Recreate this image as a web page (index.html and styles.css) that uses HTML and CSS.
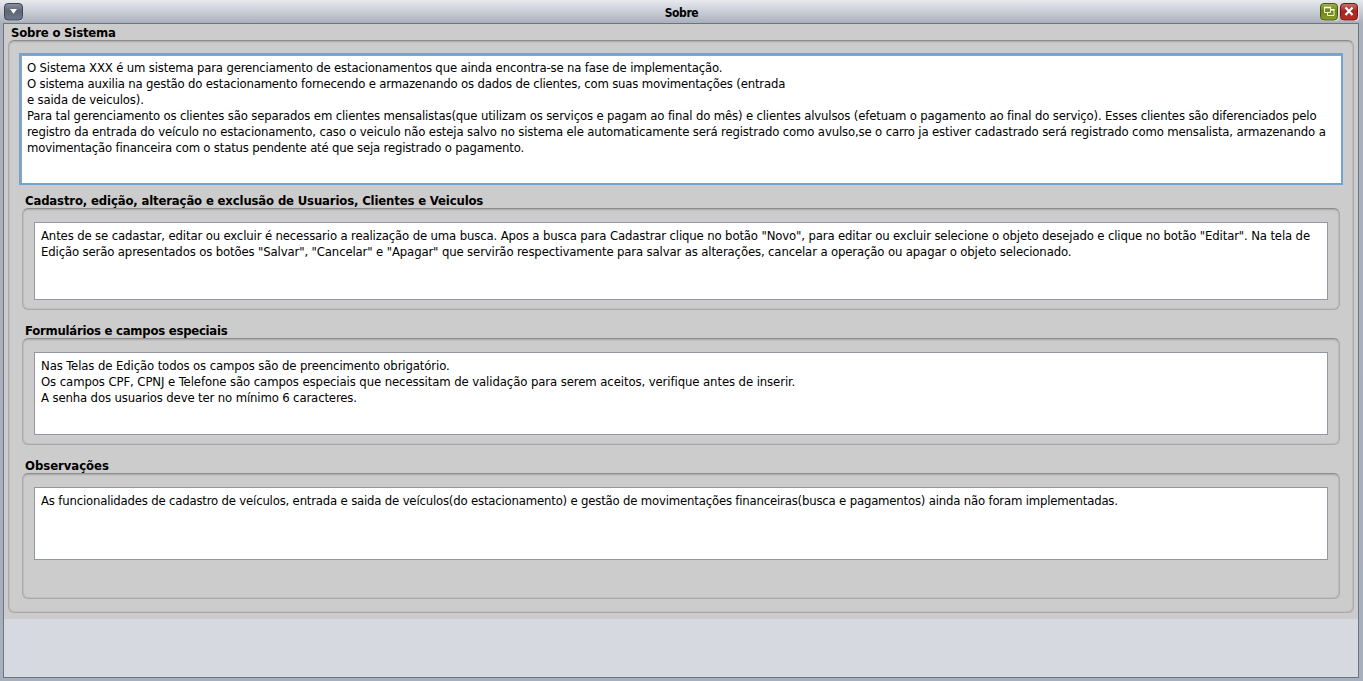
FILE: index.html
```html
<!DOCTYPE html>
<html lang="pt-BR">
<head>
<meta charset="utf-8">
<title>Sobre</title>
<link rel="stylesheet" href="styles.css">
</head>
<body>
<div class="window">
  <header class="titlebar">
    <svg class="btn" width="20" height="20" viewBox="0 0 20 20"><defs><linearGradient id="g1" x1="0" y1="0" x2="0" y2="1"><stop offset="0" stop-color="#8b92a1"/><stop offset=".45" stop-color="#5c6475"/><stop offset="1" stop-color="#6f788a"/></linearGradient></defs><rect x="1" y="2" width="18" height="17" rx="3.5" fill="#d9dde4"/><rect x=".5" y="1.5" width="18" height="16.5" rx="3.5" fill="url(#g1)" stroke="#3d4656"/><path d="M6 7h7L9.5 11.8z" fill="#fff"/></svg>
    <h1 class="title">Sobre</h1>
    <div class="controls">
      <svg class="btn" width="19" height="20" viewBox="0 0 19 20"><defs><linearGradient id="g2" x1="0" y1="0" x2="0" y2="1"><stop offset="0" stop-color="#a1b258"/><stop offset=".45" stop-color="#6e8419"/><stop offset="1" stop-color="#8a9d29"/></linearGradient></defs><rect x="1" y="2" width="18" height="17" rx="3.5" fill="#e0e3e7"/><rect x=".5" y="1.5" width="17" height="16.5" rx="3.5" fill="url(#g2)" stroke="#4c5e0c"/><path d="M11 7.500h3v6H7.500v-3" fill="none" stroke="#f1f4dc"/><path d="M4.500 5.500h6v5h-6z" fill="none" stroke="#f1f4dc"/><path d="M4 5.500h7M11 7.800h3.500" stroke="#fff" stroke-width="1.600"/></svg>
      <svg class="btn" width="19" height="20" viewBox="0 0 19 20"><defs><linearGradient id="g3" x1="0" y1="0" x2="0" y2="1"><stop offset="0" stop-color="#ca7775"/><stop offset=".45" stop-color="#a72520"/><stop offset="1" stop-color="#b82d27"/></linearGradient></defs><rect x="1" y="2" width="18" height="17" rx="3.5" fill="#e0e3e7"/><rect x=".5" y="1.5" width="17" height="16.5" rx="3.5" fill="url(#g3)" stroke="#761411"/><path d="M5.500 5.500l7 7.500M12.500 5.500l-7 7.500" stroke="#fff" stroke-width="2.200"/></svg>
    </div>
  </header>
  <main class="client">
    <section class="about">
      <h2 class="heading h-main">Sobre o Sistema</h2>
      <div class="panel panel-main">
        <div class="text focused">
          <p class="a1">O Sistema XXX é um sistema para gerenciamento de estacionamentos que ainda encontra-se na fase de implementação.</p>
          <p class="a2">O sistema auxilia na gestão do estacionamento fornecendo e armazenando os dados de clientes, com suas movimentações (entrada</p>
          <p class="a3">e saida de veiculos).</p>
          <p class="a4">Para tal gerenciamento os clientes são separados em clientes mensalistas(que utilizam os serviços e pagam ao final do mês) e clientes alvulsos (efetuam o pagamento ao final do serviço). Esses clientes são diferenciados pelo</p>
          <p class="a5">registro da entrada do veículo no estacionamento, caso o veiculo não esteja salvo no sistema ele automaticamente será registrado como avulso,se o carro ja estiver cadastrado será registrado como mensalista, armazenando a</p>
          <p class="a6">movimentação financeira com o status pendente até que seja registrado o pagamento.</p>
        </div>
        <section class="group group-one">
          <h3 class="heading h-one">Cadastro, edição, alteração e exclusão de Usuarios, Clientes e Veiculos</h3>
          <div class="panel"><div class="text">
            <p class="b1">Antes de se cadastar, editar ou excluir é necessario a realização de uma busca. Apos a busca para Cadastrar clique no botão "Novo", para editar ou excluir selecione o objeto desejado e clique no botão "Editar". Na tela de</p>
            <p class="b2">Edição serão apresentados os botões "Salvar", "Cancelar" e "Apagar" que servirão respectivamente para salvar as alterações, cancelar a operação ou apagar o objeto selecionado.</p>
          </div></div>
        </section>
        <section class="group group-two">
          <h3 class="heading h-two">Formulários e campos especiais</h3>
          <div class="panel"><div class="text">
            <p class="c1">Nas Telas de Edição todos os campos são de preencimento obrigatório.</p>
            <p class="c2">Os campos CPF, CPNJ e Telefone são campos especiais que necessitam de validação para serem aceitos, verifique antes de inserir.</p>
            <p class="c3">A senha dos usuarios deve ter no mínimo 6 caracteres.</p>
          </div></div>
        </section>
        <section class="group group-three">
          <h3 class="heading h-three">Observações</h3>
          <div class="panel"><div class="text">
            <p class="d1">As funcionalidades de cadastro de veículos, entrada e saida de veículos(do estacionamento) e gestão de movimentações financeiras(busca e pagamentos) ainda não foram implementadas.</p>
          </div></div>
        </section>
      </div>
    </section>
  </main>
</div>
</body>
</html>
```
FILE: styles.css
```css
* { box-sizing: border-box; }
body { margin: 0; overflow: hidden; font: 13px/16px Tahoma, "DejaVu Sans Condensed", "DejaVu Sans", sans-serif; font-stretch: condensed; color: #000; }
h1, h2, h3, p { margin: 0; }
.window { width: 1363px; height: 681px; display: flex; flex-direction: column; padding: 0 4px 3px 3px; background: linear-gradient(#e8eaee 0, #aab0bc 23px, #a8afbc 100%); }
.titlebar { height: 23px; display: flex; justify-content: space-between; padding: 2px 0 0 1px; }
.title { font-size: 12px; line-height: 22px; font-weight: bold; letter-spacing: -0.4px; margin-left: 19px; }
.btn { display: block; }
.controls { display: flex; gap: 1px; }
.client { flex: 1; border: 1px solid #6b7483; background: #d6d9e0; }
.about { height: 595px; background: #ccc; padding: 1px 4px 6px; }
.heading { height: 16px; padding-left: 3px; font-size: 13px; line-height: 16px; font-weight: bold; white-space: nowrap; }
.panel { border: 1px solid #a9a9a9; border-top-color: #8c8c8c; border-radius: 6px; padding: 13px 11px; box-shadow: inset 0 1px #b0b0b0, inset 0 2px 1px #c0c0c0, inset 1px 0 1px #bcbcbc, inset -1px 0 1px #bcbcbc, inset 0 -1px 1px #c0c0c0; }
.panel-main { height: 573px; margin-top: -1px; padding: 12px 10px; }
.text { background: #fff; border: 1px solid #9297a1; padding: 5px 6px; }
.text p { height: 16px; white-space: nowrap; }
.focused { height: 132px; border: 2px solid #73a4d1; padding: 5px 6px; box-shadow: inset 1px 1px #98a2b5; }
.group { padding: 7px 3px 0; }
.group .heading { line-height: 17px; }
.group-one { height: 130px; }
.group-one .panel { height: 102px; }
.group-one .text { height: 78px; }
.group-two { height: 135px; }
.group-two .panel { height: 107px; }
.group-two .text { height: 83px; }
.group-three .panel { height: 126px; }
.group-three .text { height: 73px; }

/* tracking per line */
.h-main { letter-spacing: -0.2px; }
.h-one { letter-spacing: -0.157px; }
.h-two { letter-spacing: -0.25px; }
.h-three { letter-spacing: -0.04px; }
.a1 { letter-spacing: -0.165px; }
.a2 { letter-spacing: -0.182px; }
.a3 { letter-spacing: -0.16px; }
.a4 { letter-spacing: -0.157px; }
.a5 { letter-spacing: -0.147px; }
.a6 { letter-spacing: -0.185px; }
.b1 { letter-spacing: -0.142px; }
.b2 { letter-spacing: -0.14px; }
.c1 { letter-spacing: -0.115px; }
.c2 { letter-spacing: -0.096px; }
.c3 { letter-spacing: -0.139px; }
.d1 { letter-spacing: -0.185px; }
```
